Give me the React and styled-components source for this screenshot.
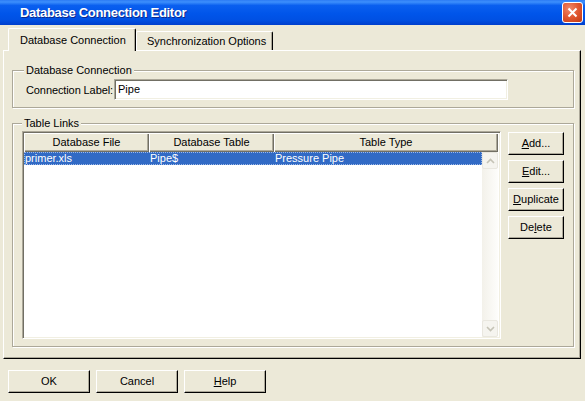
import React from 'react';
import styled, { createGlobalStyle } from 'styled-components';

const GlobalStyle = createGlobalStyle`
  html, body {
    margin: 0;
    padding: 0;
    background: #ece9d8;
  }
  body {
    font-family: "Liberation Sans", Arial, sans-serif;
    font-size: 11px;
    color: #000;
  }
`;

const Window = styled.div`
  width: 585px;
  height: 401px;
  overflow: hidden;
  background: #ece9d8;
  display: flex;
  flex-direction: column;
`;

const TitleBar = styled.div`
  flex: none;
  height: 25px;
  box-sizing: border-box;
  display: flex;
  align-items: center;
  justify-content: space-between;
  padding: 0 2px 0 20px;
  background: linear-gradient(
    to bottom,
    #2c7bf4 0%,
    #3d8ffc 8%,
    #0a5fef 22%,
    #0055ea 55%,
    #0050e3 80%,
    #003fcc 100%
  );
`;

const Title = styled.span`
  color: #fff;
  font: bold 13px "Liberation Sans", Arial, sans-serif;
  text-shadow: 1px 1px 0 #0b2a8f;
  letter-spacing: -0.3px;
`;

const CloseButton = styled.div`
  width: 21px;
  height: 21px;
  box-sizing: border-box;
  border: 1px solid #fff;
  border-radius: 3px;
  background: radial-gradient(circle at 35% 30%, #f0886a 0%, #e0562f 50%, #c13a12 100%);
  display: flex;
  align-items: center;
  justify-content: center;
`;

const TabStrip = styled.div`
  flex: none;
  height: 22px;
  margin-top: 3px;
  padding-left: 8px;
  display: flex;
  align-items: flex-end;
`;

const Tab = styled.div`
  box-sizing: border-box;
  width: ${p => p.$width}px;
  height: ${p => (p.$active ? 23 : 19)}px;
  margin-bottom: ${p => (p.$active ? -1 : 0)}px;
  position: relative;
  z-index: ${p => (p.$active ? 2 : 1)};
  background: #ece9d8;
  border-top: 1px solid #fff;
  border-left: 1px solid #fff;
  border-right: 1px solid #000;
  border-radius: 2px 2px 0 0;
  box-shadow: inset -1px 0 0 #aca899;
  padding-left: ${p => p.$pad}px;
  line-height: ${p => (p.$active ? 22 : 18)}px;
  white-space: nowrap;
`;

const Panel = styled.div`
  flex: none;
  box-sizing: border-box;
  margin-left: 3px;
  width: 578px;
  height: 309px;
  border-top: 1px solid #fff;
  border-left: 1px solid #fff;
  border-right: 1px solid #000;
  border-bottom: 1px solid #000;
  box-shadow: inset -1px -1px 0 #aca899;
  padding: 0 6px 0 8px;
  display: flex;
  flex-direction: column;
`;

const Group = styled.fieldset`
  margin: ${p => p.$top}px 0 0 0;
  padding: ${p => p.$padding};
  border: 1px solid #aca899;
  box-shadow: inset 1px 1px 0 #fff, 1px 1px 0 #fff;
  min-width: 0;
`;

const Legend = styled.legend`
  padding: 0 2px;
  margin-left: ${p => p.$offset}px;
  background: #ece9d8;
  line-height: 13px;
`;

const FieldRow = styled.div`
  display: flex;
  align-items: center;
`;

const FieldLabel = styled.span`
  flex: none;
  margin-right: 1px;
  white-space: nowrap;
  letter-spacing: -0.1px;
`;

const TextBox = styled.div`
  box-sizing: border-box;
  width: 394px;
  height: 21px;
  background: #fff;
  border-top: 1px solid #aca899;
  border-left: 1px solid #aca899;
  border-right: 1px solid #fff;
  border-bottom: 1px solid #fff;
  box-shadow: inset 1px 1px 0 #716f64, inset -1px -1px 0 #f1efe2;
  padding: 0 3px;
  line-height: 19px;
`;

const LinksBody = styled.div`
  display: flex;
  gap: 7px;
  align-items: flex-start;
`;

const ListView = styled.div`
  box-sizing: border-box;
  width: 479px;
  height: 208px;
  background: #fff;
  border-top: 1px solid #aca899;
  border-left: 1px solid #aca899;
  border-right: 1px solid #fff;
  border-bottom: 1px solid #fff;
  box-shadow: inset 1px 1px 0 #716f64, inset -1px -1px 0 #f1efe2;
  padding: 1px;
  display: flex;
  flex-direction: column;
`;

const HeaderRow = styled.div`
  flex: none;
  display: grid;
  grid-template-columns: 125px 125px 1fr;
  height: 19px;
  margin-right: 1px;
`;

const HeaderCell = styled.div`
  background: #ece9d8;
  box-shadow: inset 1px 1px 0 #fff, inset -1px -1px 0 #716f64, inset -2px -2px 0 #aca899;
  text-align: center;
  line-height: 18px;
  white-space: nowrap;
`;

const ListBody = styled.div`
  flex: 1;
  display: flex;
  min-height: 0;
`;

const Rows = styled.div`
  flex: 1;
`;

const Row = styled.div`
  display: grid;
  grid-template-columns: 125px 125px 1fr;
  height: 13px;
  line-height: 13px;
  background: ${p => (p.$selected ? '#316ac5' : 'transparent')};
  color: ${p => (p.$selected ? '#fff' : '#000')};
  outline: ${p => (p.$selected ? '1px dotted #9db8e6' : 'none')};
  outline-offset: -1px;
`;

const Cell = styled.span`
  padding-left: 1px;
  white-space: nowrap;
  overflow: hidden;
`;

const ScrollBar = styled.div`
  flex: none;
  width: 16px;
  margin-right: 1px;
  display: flex;
  flex-direction: column;
  justify-content: space-between;
  background: linear-gradient(to right, #f3f1ea, #fdfdfb);
`;

const ScrollArrow = styled.div`
  box-sizing: border-box;
  height: 17px;
  background: #f5f4ef;
  border: 1px solid #e9e7df;
  border-radius: 2px;
  display: flex;
  align-items: center;
  justify-content: center;
`;

const SideButtons = styled.div`
  display: flex;
  flex-direction: column;
  gap: 5px;
  padding-top: 1px;
`;

const Button = styled.div`
  box-sizing: border-box;
  width: ${p => p.$width}px;
  height: 23px;
  background: #ece9d8;
  border-top: 1px solid #fff;
  border-left: 1px solid #fff;
  border-right: 1px solid #000;
  border-bottom: 1px solid #000;
  box-shadow: inset -1px -1px 0 #aca899;
  text-align: center;
  line-height: 20px;
  white-space: nowrap;

  u {
    text-decoration: underline;
    text-underline-offset: 1px;
  }
`;

const Footer = styled.div`
  flex: none;
  display: flex;
  gap: 6px;
  padding: 11px 0 0 8px;
`;

const Chevron = ({ up }) => (
  <svg width="9" height="6" viewBox="0 0 9 6">
    <path
      d={up ? 'M1 5 L4.5 1.5 L8 5' : 'M1 1 L4.5 4.5 L8 1'}
      fill="none"
      stroke="#c5c3b6"
      strokeWidth="1.6"
    />
  </svg>
);

const columns = ['Database File', 'Database Table', 'Table Type'];
const rows = [['primer.xls', 'Pipe$', 'Pressure Pipe']];

export default function App() {
  return (
    <Window>
      <GlobalStyle />
      <TitleBar>
        <Title>Database Connection Editor</Title>
        <CloseButton>
          <svg width="11" height="11" viewBox="0 0 11 11">
            <path d="M1.5 1.5 L9.5 9.5 M9.5 1.5 L1.5 9.5" stroke="#fff" strokeWidth="2" />
          </svg>
        </CloseButton>
      </TitleBar>

      <TabStrip>
        <Tab $active $width={128} $pad={11}>Database Connection</Tab>
        <Tab $width={137} $pad={10}>Synchronization Options</Tab>
      </TabStrip>

      <Panel>
        <Group $top={13} $padding="2px 12px 7px 13px">
          <Legend $offset={-2}>Database Connection</Legend>
          <FieldRow>
            <FieldLabel>Connection Label:</FieldLabel>
            <TextBox>Pipe</TextBox>
          </FieldRow>
        </Group>

        <Group $top={9} $padding="1px 8px 7px 9px">
          <Legend $offset={0}>Table Links</Legend>
          <LinksBody>
            <ListView>
              <HeaderRow>
                {columns.map(c => (
                  <HeaderCell key={c}>{c}</HeaderCell>
                ))}
              </HeaderRow>
              <ListBody>
                <Rows>
                  {rows.map((r, i) => (
                    <Row key={i} $selected={i === 0}>
                      {r.map((v, j) => (
                        <Cell key={j}>{v}</Cell>
                      ))}
                    </Row>
                  ))}
                </Rows>
                <ScrollBar>
                  <ScrollArrow><Chevron up /></ScrollArrow>
                  <ScrollArrow><Chevron /></ScrollArrow>
                </ScrollBar>
              </ListBody>
            </ListView>
            <SideButtons>
              <Button $width={56}><u>A</u>dd...</Button>
              <Button $width={56}><u>E</u>dit...</Button>
              <Button $width={56}><u>D</u>uplicate</Button>
              <Button $width={56}>De<u>l</u>ete</Button>
            </SideButtons>
          </LinksBody>
        </Group>
      </Panel>

      <Footer>
        <Button $width={82}>OK</Button>
        <Button $width={82}>Cancel</Button>
        <Button $width={82}><u>H</u>elp</Button>
      </Footer>
    </Window>
  );
}
